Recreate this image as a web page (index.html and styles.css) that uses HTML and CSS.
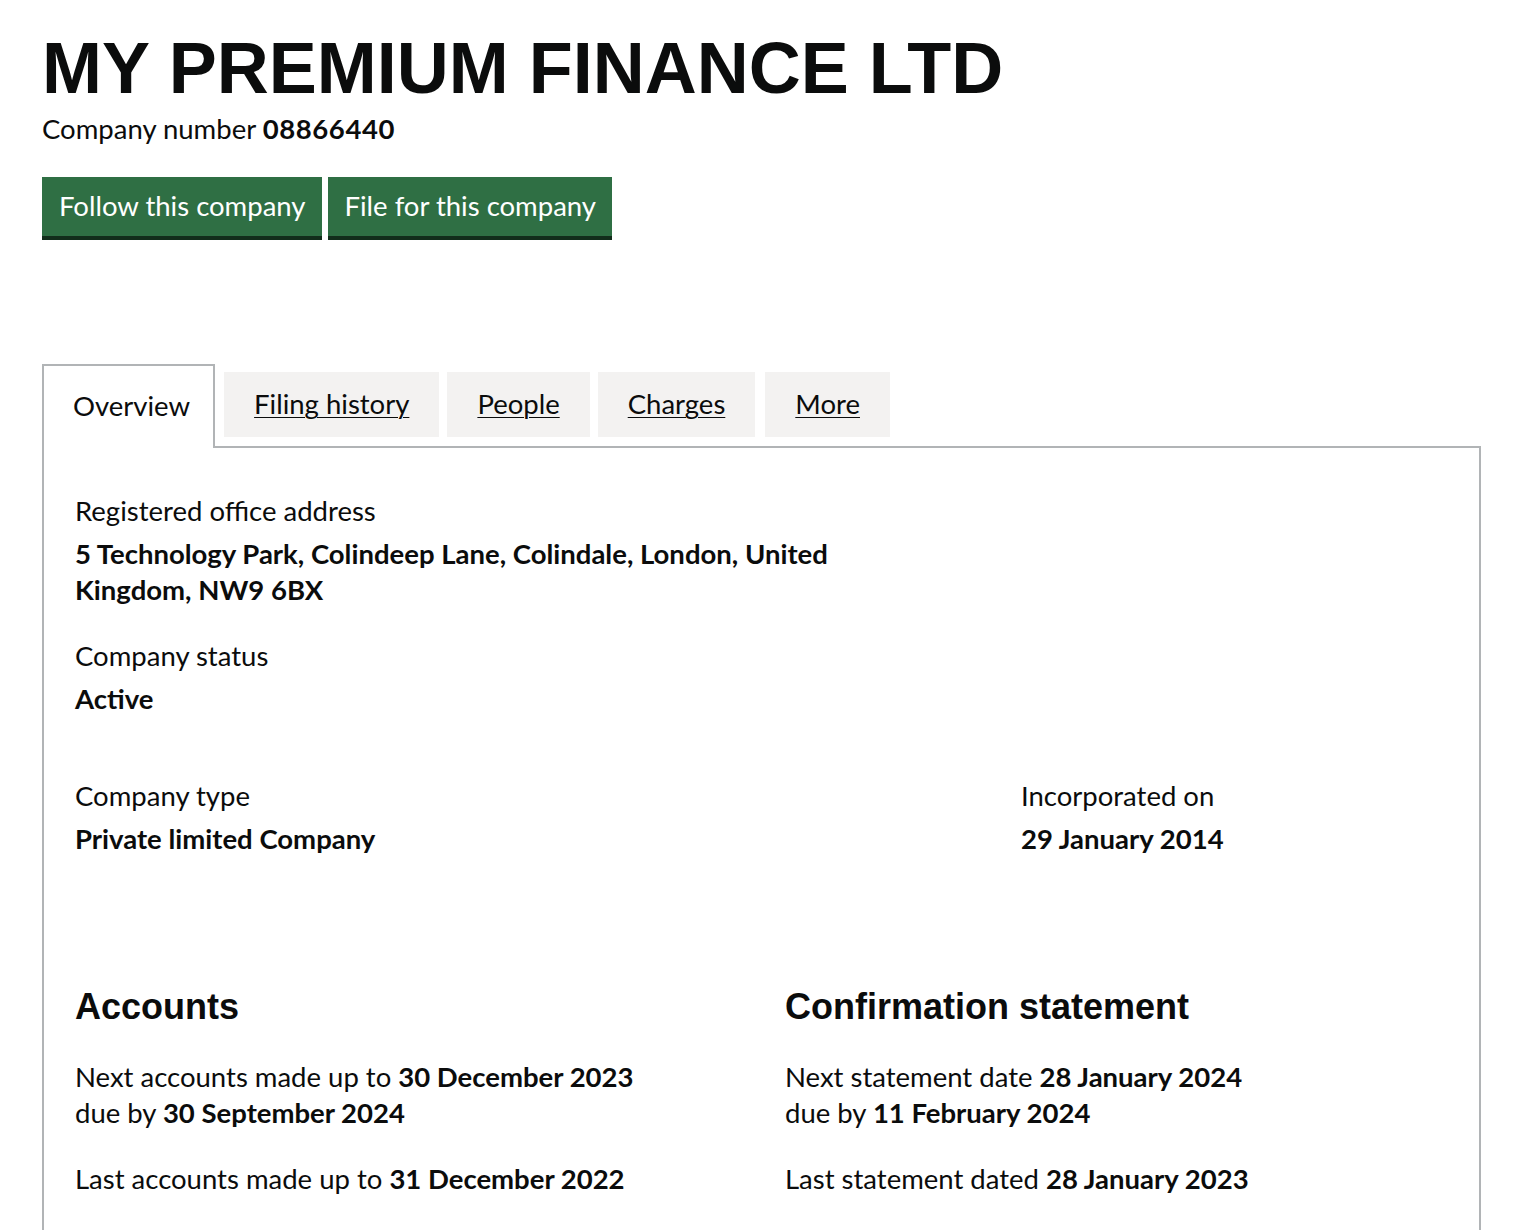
FILE: index.html
```html
<!DOCTYPE html>
<html lang="en">
<head>
<meta charset="utf-8">
<title>MY PREMIUM FINANCE LTD overview</title>
<link rel="stylesheet" href="styles.css">
</head>
<body>
<main class="page">
  <h1 class="company-name">MY PREMIUM FINANCE LTD</h1>
  <p class="company-number">Company number <strong>08866440</strong></p>
  <div class="actions">
    <a class="button" href="#">Follow this company</a>
    <a class="button" href="#">File for this company</a>
  </div>

  <ul class="tabs">
    <li class="tab tab-selected">Overview</li>
    <li class="tab"><a href="#">Filing history</a></li>
    <li class="tab"><a href="#">People</a></li>
    <li class="tab"><a href="#">Charges</a></li>
    <li class="tab tab-more"><a href="#">More</a></li>
  </ul>

  <section class="panel">
    <dl class="detail">
      <dt>Registered office address</dt>
      <dd class="address">5 Technology Park, Colindeep Lane, Colindale, London, United Kingdom, NW9 6BX</dd>
    </dl>
    <dl class="detail">
      <dt>Company status</dt>
      <dd>Active</dd>
    </dl>

    <div class="row row-type">
      <dl class="detail">
        <dt>Company type</dt>
        <dd>Private limited Company</dd>
      </dl>
      <dl class="detail">
        <dt>Incorporated on</dt>
        <dd>29 January 2014</dd>
      </dl>
    </div>

    <div class="row row-half">
      <div class="block">
        <h2 class="heading">Accounts</h2>
        <p class="line">Next accounts made up to <strong>30 December 2023</strong><br>due by <strong>30 September 2024</strong></p>
        <p class="line">Last accounts made up to <strong>31 December 2022</strong></p>
      </div>
      <div class="block">
        <h2 class="heading">Confirmation statement</h2>
        <p class="line">Next statement date <strong>28 January 2024</strong><br>due by <strong>11 February 2024</strong></p>
        <p class="line">Last statement dated <strong>28 January 2023</strong></p>
      </div>
    </div>
  </section>
</main>
</body>
</html>
```

FILE: styles.css
```css
html, body {
  margin: 0;
  padding: 0;
  background: #ffffff;
}

body {
  color: #0b0c0c;
  font-family: Lato, "Noto Sans", sans-serif;
  font-size: 27.5px;
  line-height: 36px;
}

.page {
  padding: 0 41px 0 42px;
}

.company-name {
  font-family: "Liberation Sans", Arial, sans-serif;
  font-weight: 700;
  font-size: 72px;
  line-height: 72px;
  margin: 32px 0 0;
}

.company-number {
  margin: 7px 0 0;
}

.company-number strong {
  font-weight: 700;
  letter-spacing: 0.6px;
}

.actions {
  display: flex;
  gap: 6px;
  margin-top: 30px;
}

.button {
  display: block;
  background: #2f6f44;
  color: #ffffff;
  text-decoration: none;
  font-size: 27.5px;
  line-height: 36px;
  padding: 11px 16px 12px 17px;
  box-shadow: 0 4px 0 #122d1b;
}

.tabs {
  list-style: none;
  margin: 128px 0 0;
  padding: 0;
  display: flex;
  align-items: flex-end;
  gap: 8px;
}

.tab {
  background: #f3f2f1;
  padding: 14px 30px 15px;
  margin-bottom: 9px;
}

.tab-more {
  margin-left: 2px;
}

.tab a {
  color: #0b0c0c;
  text-decoration: underline;
  text-underline-offset: 3px;
  text-decoration-thickness: 1px;
}

.tab-selected {
  position: relative;
  z-index: 1;
  background: #ffffff;
  border: 2px solid #b1b4b6;
  border-bottom: 0;
  padding: 22px 23px 24px 29px;
  margin-right: 1px;
  margin-bottom: -2px;
}

.panel {
  border: 2px solid #b1b4b6;
  padding: 45px 0 40px 31px;
}

.detail {
  margin: 0 0 30px;
}

.detail dt {
  margin: 0 0 7px;
}

.detail dd {
  margin: 0;
  font-weight: 700;
}

.address {
  max-width: 850px;
}

.row {
  display: grid;
}

.row-type {
  grid-template-columns: 946px 1fr;
  margin-top: 61px;
}

.row-half {
  grid-template-columns: 710px 1fr;
  margin-top: 100px;
}

.heading {
  font-family: "Liberation Sans", Arial, sans-serif;
  font-weight: 700;
  font-size: 36px;
  line-height: 40px;
  margin: 0 0 32px;
}

.line {
  margin: 0 0 30px;
}
```
